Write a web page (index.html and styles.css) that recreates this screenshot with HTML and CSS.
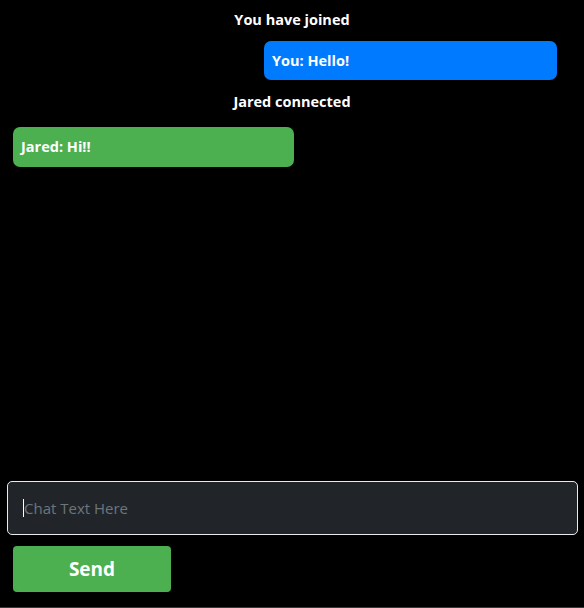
FILE: index.html
```html
<!DOCTYPE html>
<html>
<head>
<meta charset="utf-8">
<link rel="stylesheet" href="styles.css">
</head>
<body>
<div class="app">
  <div class="messages">
    <div class="status status-first">You have joined</div>
    <div class="bubble bubble-me">You: Hello!</div>
    <div class="status">Jared connected</div>
    <div class="bubble bubble-other">Jared: Hi!!</div>
  </div>
  <div class="composer">
    <div class="input"><span class="caret"></span><span class="placeholder">Chat Text Here</span></div>
    <button class="send">Send</button>
  </div>
  <div class="footer-line"></div>
</div>
</body>
</html>
```

FILE: styles.css
```css
html, body {
  margin: 0;
  padding: 0;
  background: #000;
}
body {
  font-family: "Open Sans", "Noto Sans", sans-serif;
  color: #fff;
}
.app {
  height: 608px;
  display: flex;
  flex-direction: column;
}
.messages {
  flex: 1;
  display: flex;
  flex-direction: column;
}
.status {
  font-weight: 700;
  font-size: 14.5px;
  line-height: 20px;
  text-align: center;
  margin-top: 12px;
  margin-bottom: 15px;
}
.status-first {
  margin-top: 10px;
  margin-bottom: 11px;
}
.bubble {
  font-weight: 700;
  font-size: 14.5px;
  line-height: 19px;
  padding: 10px 8px;
  border-radius: 7px;
  box-sizing: border-box;
  height: 39px;
  color: #fff;
}
.bubble-me {
  background: #007bff;
  width: 293px;
  align-self: flex-end;
  margin-right: 27px;
}
.bubble-other {
  background: #4caf50;
  width: 281px;
  height: 40px;
  margin-left: 13px;
}
.composer {
  display: flex;
  flex-direction: column;
  align-items: flex-start;
  padding: 0 6px 0 7px;
}
.input {
  box-sizing: border-box;
  width: 100%;
  height: 54px;
  border: 1px solid #e9ecef;
  border-radius: 5px;
  background: #212529;
  display: flex;
  align-items: center;
  padding-left: 15px;
}
.caret {
  width: 1px;
  height: 18px;
  background: #fff;
}
.placeholder {
  color: #6c757d;
  font-size: 15px;
  font-weight: 400;
}
.send {
  margin-top: 11px;
  margin-left: 6px;
  width: 158px;
  height: 46px;
  background: #4caf50;
  border: none;
  border-radius: 4px;
  color: #fff;
  font-family: "Open Sans", "Noto Sans", sans-serif;
  font-weight: 700;
  font-size: 19px;
  padding: 0;
}
.footer-line {
  height: 1px;
  margin-top: 15px;
  background: #3a3a3a;
}
```
